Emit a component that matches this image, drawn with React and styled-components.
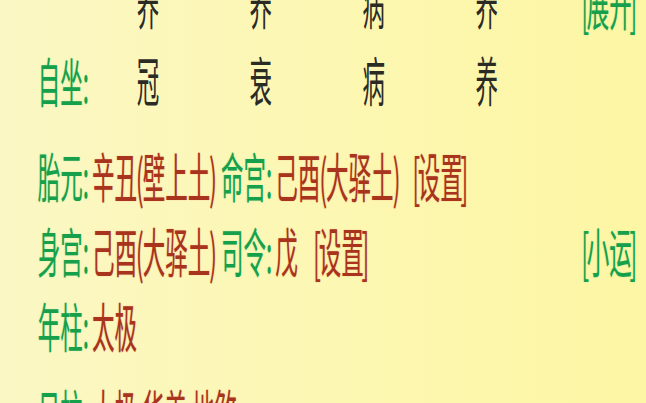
import React from 'react';
import styled, { createGlobalStyle } from 'styled-components';

const GlobalStyle = createGlobalStyle`
html, body {
  margin: 0;
  padding: 0;
  overflow: hidden;
}
body {
  background: linear-gradient(90deg, #fbf7c4 0%, #fcf7b4 45%, #fdf6a4 100%);
  font-family: "Noto Sans CJK SC", "Noto Sans", sans-serif;
}
`

const SCALE = 0.4245;

const Page = styled.div`
width: 646px;
height: 403px;
overflow: hidden;
`
const Stage = styled.div`
width: ${646 / SCALE}px;
transform: scaleX(${SCALE});
transform-origin: 0 0;
padding: 0 26px 0 89px;
box-sizing: border-box;
font-size: 53px;
`
const Table = styled.div`
display: grid;
grid-template-columns: 233px 266px 266px 266px 1fr auto;
grid-auto-rows: 77px;
align-items: center;
margin-top: -36px;
`
const Cell = styled.span`
color: #2b2b26;
line-height: 77px;
`
const Label = styled.span`
color: #17a04c;
text-shadow: 0 0 2px rgba(40, 210, 110, 0.35);
white-space: pre;
margin-right: 0.13em;
`
const Value = styled.span`
color: #a8341d;
text-shadow: 0 0 2px rgba(210, 40, 20, 0.3);
white-space: pre;
`
const Link = styled.span`
color: ${p => (p.$green ? '#17a04c' : '#a8341d')};
text-shadow: 0 0 2px ${p => (p.$green ? 'rgba(40, 210, 110, 0.35)' : 'rgba(210, 40, 20, 0.3)')};
margin-left: ${p => p.$gap || 0}px;
white-space: nowrap;
${p => p.$end && 'justify-self: end; margin-left: auto;'}
`
const Narrow = styled.span`
margin: 0 ${p => (p.$tight ? -0.1 : -0.04)}em;
`
const Info = styled.div`
margin-top: 20px;
display: flex;
flex-direction: column;
`
const Line = styled.div`
display: flex;
align-items: center;
height: 75px;
line-height: 75px;
white-space: nowrap;
margin-top: ${p => p.$push || 0}px;
`

const TOP = ['养', '养', '病', '养'];
const SELF = ['冠', '衰', '病', '养'];

function Action({ children, ...rest }) {
    return (
        <Link {...rest}>
            <Narrow $tight>[</Narrow>{children}<Narrow $tight>]</Narrow>
        </Link>
    )
}

function Pillar({ main, nayin, trail }) {
    return (
        <Value>
            {main}<Narrow>(</Narrow>{nayin}<Narrow>)</Narrow>{trail ? ' ' : ''}
        </Value>
    )
}

export default function App() {
    return (
        <>
            <GlobalStyle />
            <Page>
                <Stage>
                    <Table>
                        <span />
                        {TOP.map((t, i) => <Cell key={i}>{t}</Cell>)}
                        <Action $green $end>展开</Action>
                        <Label>自坐:</Label>
                        {SELF.map((t, i) => <Cell key={i}>{t}</Cell>)}
                        <span />
                    </Table>
                    <Info>
                        <Line>
                            <Label>胎元:</Label>
                            <Pillar main="辛丑" nayin="壁上土" trail />
                            <Label>命宫:</Label>
                            <Pillar main="己酉" nayin="大驿土" />
                            <Action $gap={36}>设置</Action>
                        </Line>
                        <Line>
                            <Label>身宫:</Label>
                            <Pillar main="己酉" nayin="大驿土" trail />
                            <Label>司令:</Label>
                            <Value>戊</Value>
                            <Action $gap={42}>设置</Action>
                            <Action $green $end>小运</Action>
                        </Line>
                        <Line>
                            <Label>年柱:</Label>
                            <Value>太极</Value>
                        </Line>
                        <Line $push={12}>
                            <Label>日柱:</Label>
                            <Value>太极 华盖 地煞</Value>
                        </Line>
                    </Info>
                </Stage>
            </Page>
        </>
    )
}
